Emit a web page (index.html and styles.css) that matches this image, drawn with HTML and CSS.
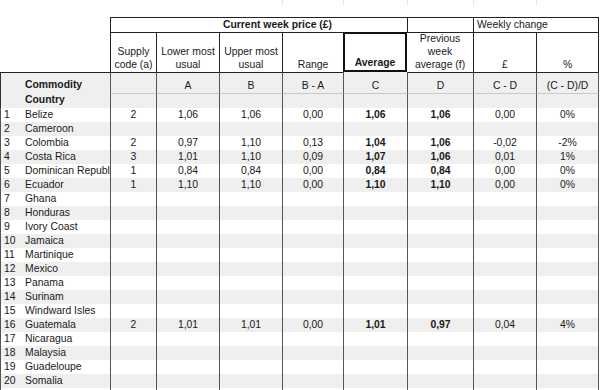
FILE: index.html
```html
<!DOCTYPE html>
<html lang="en">
<head>
    <meta charset="UTF-8" />
    <title>Weekly prices</title>
    <link rel="stylesheet" href="styles.css">
</head>
<body>
    <table class="sheet">
        <colgroup>
            <col class="c-num">
            <col class="c-name">
            <col class="c-code">
            <col class="c-low">
            <col class="c-up">
            <col class="c-range">
            <col class="c-avg">
            <col class="c-prev">
            <col class="c-diff">
            <col class="c-pct">
        </colgroup>

        <tr class="ghost">
            <td></td><td></td><td></td><td></td><td></td>
            <td class="g"></td><td class="g"></td><td class="g"></td><td class="g"></td><td class="g"></td>
        </tr>
        <tr class="gap"><td colspan="10"></td></tr>

        <tr class="head-1">
            <td colspan="2" class="blank"></td>
            <td colspan="5" class="title">Current week price (£)</td>
            <td class="box"></td>
            <td colspan="2" class="box weekly">Weekly change</td>
        </tr>

        <tr class="head-2">
            <td colspan="2" class="blank"></td>
            <td class="box">Supply<br>code (a)</td>
            <td class="box">Lower most<br>usual</td>
            <td class="box">Upper most<br>usual</td>
            <td class="box">Range</td>
            <td class="box avg">Average</td>
            <td class="box prev">Previous<br>week<br>average (f)</td>
            <td class="box">£</td>
            <td class="box last">%</td>
        </tr>

        <tr class="head-a">
            <td rowspan="2" class="edge"></td>
            <td rowspan="2" class="commodity">Commodity<br>Country</td>
            <td class="col"></td>
            <td class="col">A</td>
            <td class="col">B</td>
            <td class="col">B - A</td>
            <td class="col under-avg">C</td>
            <td class="col">D</td>
            <td class="col">C - D</td>
            <td class="col last">(C - D)/D</td>
        </tr>
        <tr class="head-b">
            <td class="col"></td><td class="col"></td><td class="col"></td><td class="col"></td>
            <td class="col"></td><td class="col"></td><td class="col"></td><td class="col last"></td>
        </tr>

        <tr class="row"><td>1</td><td class="name">Belize</td><td>2</td><td>1,06</td><td>1,06</td><td>0,00</td><td class="b">1,06</td><td class="b">1,06</td><td>0,00</td><td>0%</td></tr>
        <tr class="row alt"><td>2</td><td class="name">Cameroon</td><td></td><td></td><td></td><td></td><td></td><td></td><td></td><td></td></tr>
        <tr class="row"><td>3</td><td class="name">Colombia</td><td>2</td><td>0,97</td><td>1,10</td><td>0,13</td><td class="b">1,04</td><td class="b">1,06</td><td>-0,02</td><td>-2%</td></tr>
        <tr class="row alt"><td>4</td><td class="name">Costa Rica</td><td>3</td><td>1,01</td><td>1,10</td><td>0,09</td><td class="b">1,07</td><td class="b">1,06</td><td>0,01</td><td>1%</td></tr>
        <tr class="row"><td>5</td><td class="name">Dominican Republic</td><td>1</td><td>0,84</td><td>0,84</td><td>0,00</td><td class="b">0,84</td><td class="b">0,84</td><td>0,00</td><td>0%</td></tr>
        <tr class="row alt"><td>6</td><td class="name">Ecuador</td><td>1</td><td>1,10</td><td>1,10</td><td>0,00</td><td class="b">1,10</td><td class="b">1,10</td><td>0,00</td><td>0%</td></tr>
        <tr class="row"><td>7</td><td class="name">Ghana</td><td></td><td></td><td></td><td></td><td></td><td></td><td></td><td></td></tr>
        <tr class="row alt"><td>8</td><td class="name">Honduras</td><td></td><td></td><td></td><td></td><td></td><td></td><td></td><td></td></tr>
        <tr class="row"><td>9</td><td class="name">Ivory Coast</td><td></td><td></td><td></td><td></td><td></td><td></td><td></td><td></td></tr>
        <tr class="row alt"><td>10</td><td class="name">Jamaica</td><td></td><td></td><td></td><td></td><td></td><td></td><td></td><td></td></tr>
        <tr class="row"><td>11</td><td class="name">Martinique</td><td></td><td></td><td></td><td></td><td></td><td></td><td></td><td></td></tr>
        <tr class="row alt"><td>12</td><td class="name">Mexico</td><td></td><td></td><td></td><td></td><td></td><td></td><td></td><td></td></tr>
        <tr class="row"><td>13</td><td class="name">Panama</td><td></td><td></td><td></td><td></td><td></td><td></td><td></td><td></td></tr>
        <tr class="row alt"><td>14</td><td class="name">Surinam</td><td></td><td></td><td></td><td></td><td></td><td></td><td></td><td></td></tr>
        <tr class="row"><td>15</td><td class="name">Windward Isles</td><td></td><td></td><td></td><td></td><td></td><td></td><td></td><td></td></tr>
        <tr class="row alt"><td>16</td><td class="name">Guatemala</td><td>2</td><td>1,01</td><td>1,01</td><td>0,00</td><td class="b">1,01</td><td class="b">0,97</td><td>0,04</td><td>4%</td></tr>
        <tr class="row"><td>17</td><td class="name">Nicaragua</td><td></td><td></td><td></td><td></td><td></td><td></td><td></td><td></td></tr>
        <tr class="row alt"><td>18</td><td class="name">Malaysia</td><td></td><td></td><td></td><td></td><td></td><td></td><td></td><td></td></tr>
        <tr class="row"><td>19</td><td class="name">Guadeloupe</td><td></td><td></td><td></td><td></td><td></td><td></td><td></td><td></td></tr>
        <tr class="row alt"><td>20</td><td class="name">Somalia</td><td></td><td></td><td></td><td></td><td></td><td></td><td></td><td></td></tr>
        <tr class="row"><td></td><td class="name"></td><td></td><td></td><td></td><td></td><td></td><td></td><td></td><td></td></tr>
    </table>
</body>
</html>
```

FILE: styles.css
```css
body {
    margin: 0;
    background: #fff;
    color: #1a1a1a;
    font-family: "Liberation Sans", Arial, sans-serif;
    font-size: 10.4px;
}

.sheet {
    border-collapse: separate;
    border-spacing: 0;
    table-layout: fixed;
    width: 599px;
}

.c-num { width: 22px; }
.c-name { width: 88px; }
.c-code { width: 46px; }
.c-low { width: 63px; }
.c-up { width: 63px; }
.c-range { width: 61px; }
.c-avg { width: 64px; }
.c-prev { width: 66px; }
.c-diff { width: 63px; }
.c-pct { width: 63px; }

.sheet td {
    padding: 0;
    text-align: center;
    vertical-align: bottom;
    white-space: nowrap;
    overflow: hidden;
    line-height: 14px;
}

/* faint grid of the rows above the table */
.ghost { height: 5px; }
.ghost td { height: 5px; line-height: 0; }
.ghost .g { border-left: 1px solid #e2e2e2; }
.gap { height: 12px; }
.gap td { height: 12px; line-height: 0; }

/* header */
.head-1 { height: 15px; }
.head-1 td { vertical-align: middle; }

.title {
    border-top: 1px solid #222;
    border-left: 1px solid #222;
    font-weight: bold;
    padding-left: 37px !important;
}

.box {
    border-top: 1px solid #222;
    border-left: 1px solid #222;
}

.weekly {
    text-align: left !important;
    padding-left: 3px !important;
    border-right: 1px solid #222;
}

.head-2 { height: 40px; }
.head-2 td { line-height: 12.8px; padding-bottom: 1px; }
.head-2 .last { border-right: 1px solid #222; }

.head-2 .avg {
    border: 2px solid #111;
    font-weight: bold;
}

.head-2 .prev { border-left: none; }

.head-a { height: 21px; }
.head-a td {
    background: #efefef;
    border-top: 1px solid #222;
    line-height: 12.5px;
    padding-bottom: 1px;
}

.head-a .under-avg { border-top: none; }

.head-b { height: 15px; }
.head-b td { background: #efefef; }

.col { border-left: 1px solid #555; }
.head-b .col { border-top: 1px solid #c9c9c9; }
.col.last { border-right: 1px solid #555; }

.edge { border-left: 1px solid #333; }

.commodity {
    text-align: left !important;
    padding-left: 3px !important;
    font-weight: bold;
    line-height: 15px !important;
}

/* data rows */
.row { height: 14px; }
.row td { height: 14px; }
.row.alt td { background: #efefef; }

.row td:first-child {
    border-left: 1px solid #555;
    text-align: left;
    padding-left: 3px;
}

.row td:nth-child(n+3) { border-left: 1px solid #555; }
.row td:last-child { border-right: 1px solid #555; }

.row .name {
    text-align: left;
    padding-left: 3px;
}

.b { font-weight: bold; }
```
